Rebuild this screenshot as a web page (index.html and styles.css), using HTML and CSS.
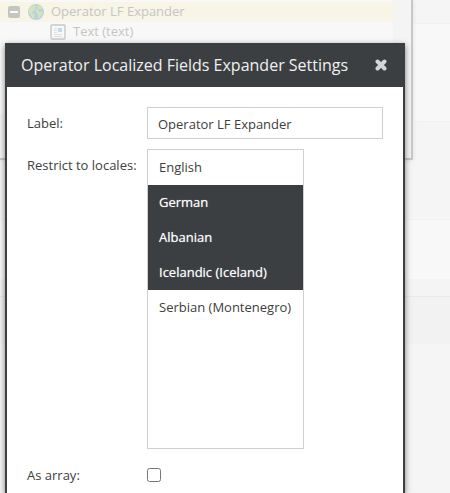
FILE: index.html
```html
<!DOCTYPE html>
<html lang="en">
<head>
<meta charset="utf-8">
<title>Operator Localized Fields Expander Settings</title>
<link rel="stylesheet" href="styles.css">
</head>
<body>
<div class="page">
  <div class="bands" aria-hidden="true">
    <div class="band band-top"></div>
    <div class="band band-light"></div>
    <div class="band band-plain"></div>
    <div class="band band-short"></div>
    <div class="band band-gap"></div>
    <div class="band band-dark"></div>
  </div>

  <section class="window">
    <ul class="tree">
      <li class="node node-selected">
        <svg class="toggle" viewBox="0 0 12 12"><rect width="12" height="12" rx="2" fill="#c5c5c4"/><rect x="2" y="5" width="8" height="2" fill="#fbfaf5"/></svg>
        <svg class="icon" viewBox="0 0 16 16"><circle cx="8" cy="8" r="8" fill="#b5d3e3"/><path d="M1 5 3 2l3-1 2 1-1 2 1 1-2 2-2 1 0 1 2 1 1 2-1 3-2-1-1-3-2-2zM10 1l3 1 2 3-2 0-2 0-1 2 2 1 2 0 1 1-2 3-2 2-1-1 0-3-2-1 0-3 2-2-1-1z" fill="#d5e3bb"/></svg>
        <span class="node-text">Operator LF Expander</span>
      </li>
      <li class="node node-child">
        <svg class="icon" viewBox="0 0 16 16"><rect x="1" y="1" width="14" height="14" rx="1" fill="#f8f8f8" stroke="#c8c8c8" stroke-width="1.4"/><path d="M4 4.500h3M4 6.500h3M4 8.500h3M4 10.500h8M4 12.500h8" stroke="#dedede"/><rect x="8" y="4" width="4" height="4" fill="#bedcf0"/></svg>
        <span class="node-text">Text (text)</span>
      </li>
    </ul>
    <div class="gutter"></div>
  </section>

  <form class="dialog" role="dialog" aria-labelledby="dialog-title">
    <header class="dialog-header">
      <h1 class="dialog-title" id="dialog-title">Operator Localized Fields Expander Settings</h1>
      <button class="close" type="button" aria-label="Close">
        <svg viewBox="0 0 12 12"><path d="M2.500 2.500l7 7M9.500 2.500l-7 7" stroke="#d4d5d5" stroke-width="4" stroke-linecap="round"/></svg>
      </button>
    </header>
    <div class="dialog-body">
      <label class="label" for="label">Label:</label>
      <input class="text-field" id="label" type="text" value="Operator LF Expander">

      <label class="label" for="locales">Restrict to locales:</label>
      <select class="locales" id="locales" multiple>
        <option>English</option>
        <option selected>German</option>
        <option selected>Albanian</option>
        <option selected>Icelandic (Iceland)</option>
        <option>Serbian (Montenegro)</option>
      </select>

      <label class="label" for="as-array">As array:</label>
      <div class="check-cell"><input class="check" id="as-array" type="checkbox"></div>
    </div>
  </form>
</div>
</body>
</html>
```

FILE: styles.css
```css
* {
  box-sizing: border-box;
}

body {
  margin: 0;
  background: #f5f5f5;
  color: #404040;
  font: 13px/20px "Open Sans", sans-serif;
}

.page {
  position: relative;
  min-height: 100vh;
  overflow: hidden;
}

.band {
  border-bottom: 1px solid #f1f1f1;
}

.band-top {
  height: 24px;
  background: #f5f5f5;
}

.band-light {
  height: 98px;
  background: #f8f8f8;
}

.band-plain {
  height: 98px;
  background: #f5f5f5;
}

.band-short {
  height: 59px;
  border: 0;
  background: #f8f8f8;
}

.band-gap {
  height: 18px;
  background: #f4f4f4;
  border-color: #e9e9e9;
}

.band-dark {
  height: 47px;
  border: 0;
  background: #f2f2f2;
}

.window {
  position: absolute;
  top: 0;
  left: 0;
  right: 37px;
  display: flex;
  height: 160px;
  border: solid #c8c8c8;
  border-width: 0 2px 2px 0;
  background: #f4f4f4;
  box-shadow: 0 0 4px rgba(0, 0, 0, 0.1);
}

.tree {
  flex: 1;
  height: 114px;
  margin: 0;
  padding: 2px 0 0;
  list-style: none;
  background: #f8f8f8;
  color: #c5c5c4;
}

.gutter {
  width: 18px;
}

.node {
  display: flex;
  align-items: center;
  gap: 7px;
  height: 20px;
  padding-left: 8px;
}

.node-selected {
  background: #f8f4e6;
}

.node-child {
  padding-left: 50px;
}

.node-text {
  padding-bottom: 2px;
}

.toggle {
  width: 12px;
  height: 12px;
  margin-right: 1px;
}

.icon {
  width: 16px;
  height: 16px;
}

.dialog {
  position: absolute;
  top: 43px;
  bottom: 0;
  left: 5px;
  right: 45px;
  border: solid #3c3f42;
  border-width: 0 2px;
  background: #fff;
  box-shadow: 0 2px 6px rgba(0, 0, 0, 0.5);
}

.dialog-header {
  display: flex;
  align-items: center;
  justify-content: space-between;
  height: 44px;
  padding: 0 16px 0 14px;
  background: #3c3f42;
}

.dialog-title {
  margin: 0;
  color: #f0f0f0;
  font-size: 16px;
  font-weight: 400;
  white-space: nowrap;
}

.close {
  display: flex;
  padding: 0;
  border: 0;
  background: none;
}

.close svg {
  width: 12px;
  height: 12px;
}

.dialog-body {
  display: grid;
  grid-template-columns: 110px 1fr;
  gap: 10px;
  padding: 20px;
}

.label {
  line-height: 32px;
  white-space: nowrap;
}

.text-field {
  width: 100%;
  height: 32px;
  padding: 2px 10px 0;
  border: 1px solid #cfcfcf;
  border-radius: 0;
  background: #fff;
  color: inherit;
  font: inherit;
}

.locales {
  width: 157px;
  height: 300px;
  padding: 0;
  overflow: hidden;
  border: 1px solid #cfcfcf;
  border-radius: 0;
  background: #fff;
  color: inherit;
  font: inherit;
  outline: 0;
}

.locales option {
  height: 35px;
  min-height: 35px;
  padding: 8px 11px 0;
  color: #404040;
}

.locales option:checked {
  background: #3c3f42 linear-gradient(#3c3f42, #3c3f42);
  color: #fff;
  -webkit-text-fill-color: #fff;
  text-shadow: 0 0 1px rgba(255, 255, 255, 0.6);
}

.check-cell {
  display: flex;
  align-items: center;
  height: 32px;
}

.check {
  width: 14px;
  height: 14px;
  margin: 0;
}
```
